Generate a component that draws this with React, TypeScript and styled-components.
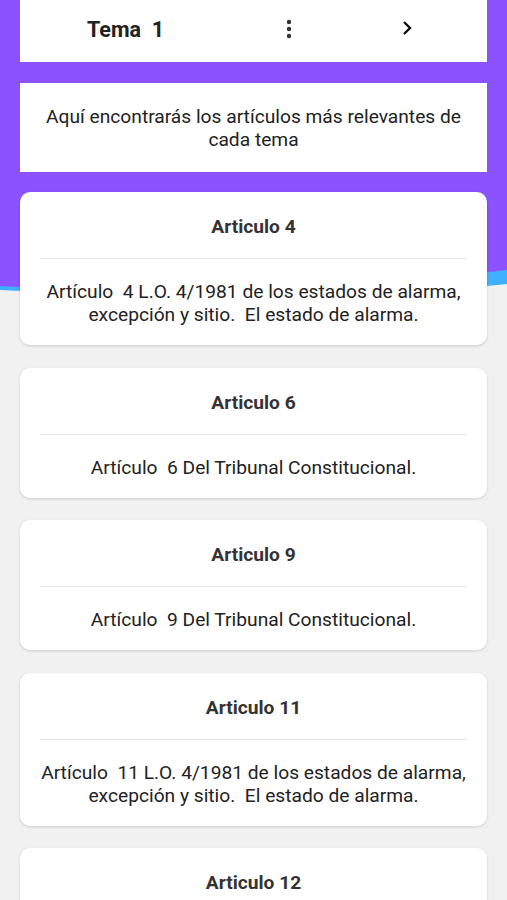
import React from 'react'
import styled, { createGlobalStyle } from 'styled-components'

const GlobalStyle = createGlobalStyle`
  html, body {
    margin: 0;
    padding: 0;
    background: #f1f1f1;
    font-family: Roboto, "Liberation Sans", sans-serif;
  }
`

const articles = [
  { title: 'Articulo 4', body: 'Artículo  4 L.O. 4/1981 de los estados de alarma, excepción y sitio.  El estado de alarma.' },
  { title: 'Articulo 6', body: 'Artículo  6 Del Tribunal Constitucional.' },
  { title: 'Articulo 9', body: 'Artículo  9 Del Tribunal Constitucional.' },
  { title: 'Articulo 11', body: 'Artículo  11 L.O. 4/1981 de los estados de alarma, excepción y sitio.  El estado de alarma.' },
  { title: 'Articulo 12', body: 'Artículo  12 L.O. 4/1981 de los estados de alarma, excepción y sitio.' },
]

const Screen = styled.div`
  position: relative;
  width: 507px;
  height: 900px;
  overflow: hidden;
  background: #f1f1f1;
`

const Backdrop = styled.svg`
  position: absolute;
  top: 0;
  left: 0;
  width: 507px;
  height: 300px;
  z-index: 0;
`

const Content = styled.div`
  position: relative;
  z-index: 1;
  display: flex;
  flex-direction: column;
  padding: 0 20px;
`

const TopBar = styled.div`
  display: flex;
  align-items: center;
  height: 62px;
  background: #fff;
  padding: 0 74px 0 67px;
`

const TemaTitle = styled.span`
  flex: 1;
  font-size: 21.5px;
  font-weight: 700;
  color: #222;
  white-space: pre;
  margin-top: -4px;
`

const Intro = styled.div`
  margin-top: 21px;
  background: #fff;
  padding: 22px 20px 21px;
  text-align: center;
  font-size: 19.2px;
  line-height: 23px;
  color: #222;
`

const List = styled.div`
  display: flex;
  flex-direction: column;
  gap: 22.5px;
  margin-top: 20px;
`

const Card = styled.div`
  background: #fff;
  border-radius: 10px;
  box-shadow: 0 1px 3px rgba(0, 0, 0, 0.16);
  padding: 20px 16px 19px;
  text-align: center;
`

const CardTitle = styled.div`
  font-size: 19.2px;
  font-weight: 700;
  line-height: 30px;
  color: #333;
`

const Divider = styled.hr`
  border: none;
  height: 1px;
  background: #e6e6e6;
  margin: 16px 4px 21px;
`

const CardBody = styled.div`
  font-size: 19.2px;
  line-height: 23px;
  color: #222;
  white-space: pre-wrap;
`

const Dots = () => (
  <svg width="8" height="22" viewBox="0 0 8 22" style={{ marginTop: -4 }}>
    <circle cx="4" cy="4" r="2.2" fill="#333" />
    <circle cx="4" cy="11" r="2.2" fill="#333" />
    <circle cx="4" cy="18" r="2.2" fill="#333" />
  </svg>
)

const Chevron = () => (
  <svg width="12" height="16" viewBox="0 0 12 16" style={{ marginLeft: 108, marginTop: -6 }}>
    <path d="M3 2 L9 8 L3 14" fill="none" stroke="#111" strokeWidth="2.4" />
  </svg>
)

export default function App() {
  return (
    <Screen>
      <GlobalStyle />
      <Backdrop viewBox="0 0 507 300" preserveAspectRatio="none">
        <path d="M0 0 H507 V284 Q 300 306 0 290 Z" fill="#3fb0ff" />
        <path d="M0 0 H507 V270 Q 250 300 0 286 Z" fill="#8c52ff" />
      </Backdrop>
      <Content>
        <TopBar>
          <TemaTitle>{'Tema  1'}</TemaTitle>
          <Dots />
          <Chevron />
        </TopBar>
        <Intro>Aquí encontrarás los artículos más relevantes de cada tema</Intro>
        <List>
          {articles.map(a => (
            <Card key={a.title}>
              <CardTitle>{a.title}</CardTitle>
              <Divider />
              <CardBody>{a.body}</CardBody>
            </Card>
          ))}
        </List>
      </Content>
    </Screen>
  )
}
